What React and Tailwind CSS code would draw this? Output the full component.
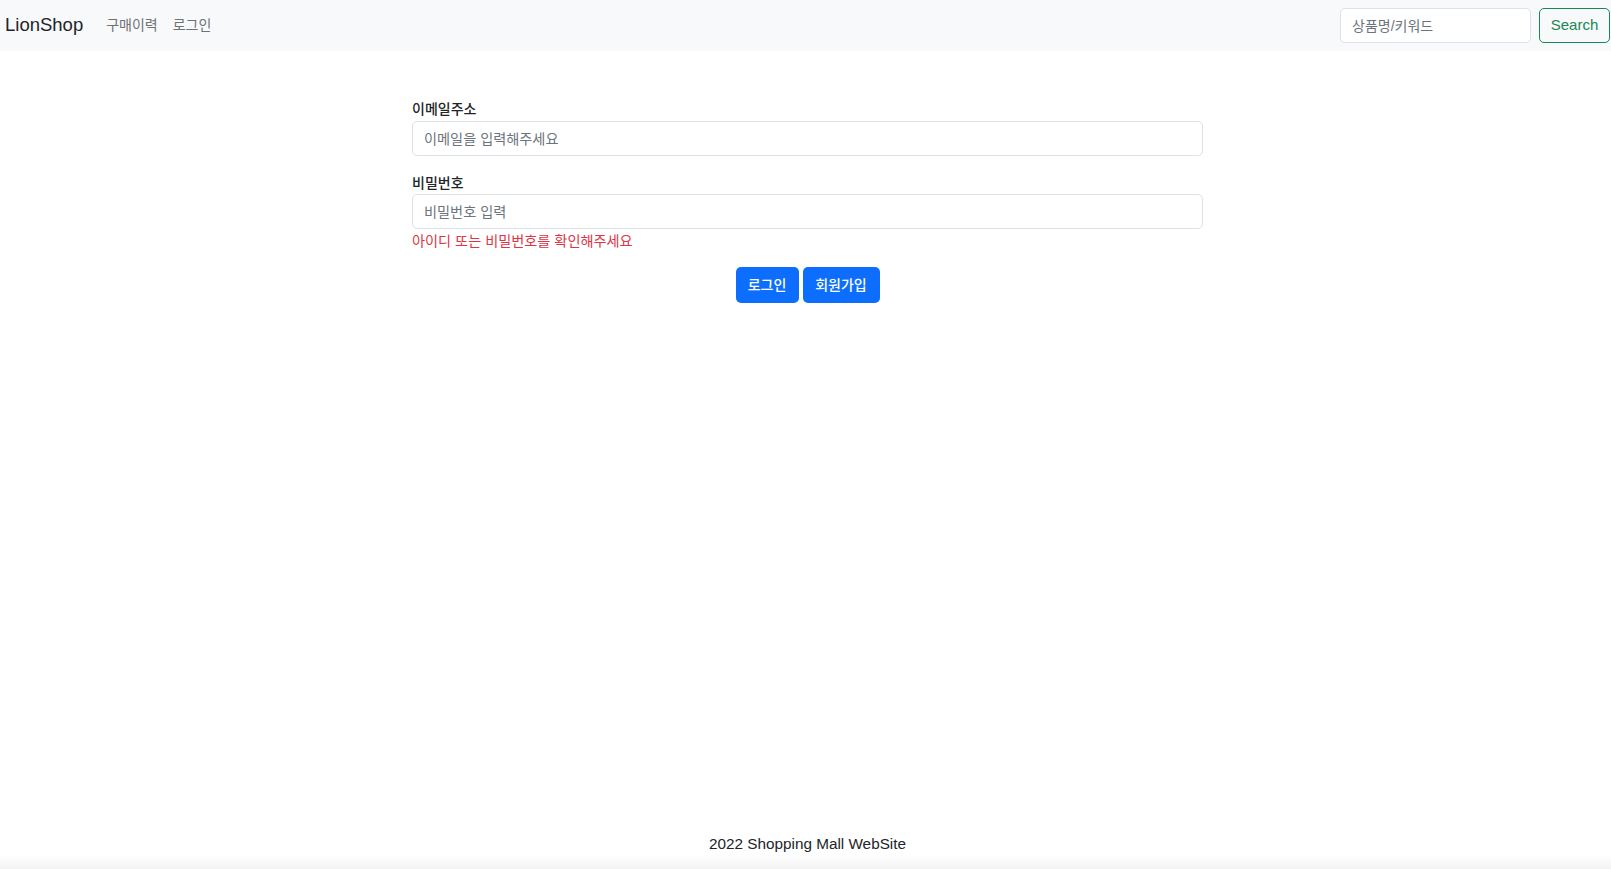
import React, { useState } from 'react';

const FONT = { fontFamily: '"Liberation Sans", "Noto Sans CJK KR", sans-serif' };

const Navbar = () => {
  const [keyword, setKeyword] = useState('');
  return (
    <nav className="flex items-center justify-between h-[51px] bg-[#f8f9fa] pl-[5px] pr-px">
      <div className="flex items-center">
        <a href="#" className="text-[18.5px] text-[#212529] mr-[23px] -mt-px">LionShop</a>
        <a href="#" className="text-[14px] text-[#6f7173] mr-[15px]">구매이력</a>
        <a href="#" className="text-[14px] text-[#6f7173]">로그인</a>
      </div>
      <form className="flex items-center gap-[8px]" onSubmit={(e) => e.preventDefault()}>
        <input
          type="text"
          value={keyword}
          onChange={(e) => setKeyword(e.target.value)}
          placeholder="상품명/키워드"
          className="w-[191px] h-[35px] px-[11px] text-[14px] bg-white border border-[#dee2e6] rounded-[5px] placeholder-[#6c757d] outline-none"
        />
        <button
          type="submit"
          className="w-[71px] h-[35px] text-[15px] text-[#198754] border border-[#198754] rounded-[5px]"
        >
          Search
        </button>
      </form>
    </nav>
  );
};

const LoginForm = () => {
  const [email, setEmail] = useState('');
  const [password, setPassword] = useState('');
  return (
    <form className="w-[791px] pt-[48px] ml-[412px]" onSubmit={(e) => e.preventDefault()}>
      <label className="block text-[14px] leading-[20px] font-medium text-[#212529] mb-[2px]">이메일주소</label>
      <input
        type="email"
        value={email}
        onChange={(e) => setEmail(e.target.value)}
        placeholder="이메일을 입력해주세요"
        className="block w-full h-[35px] px-[11px] text-[14.2px] border border-[#dee2e6] rounded-[5px] placeholder-[#6c757d] outline-none"
      />
      <label className="block mt-[17px] text-[14px] leading-[20px] font-medium text-[#212529] mb-px">비밀번호</label>
      <input
        type="password"
        value={password}
        onChange={(e) => setPassword(e.target.value)}
        placeholder="비밀번호 입력"
        className="block w-full h-[35px] px-[11px] text-[14.2px] border border-[#dee2e6] rounded-[5px] placeholder-[#6c757d] outline-none"
      />
      <p className="mt-[2px] text-[14.2px] leading-[20px] text-[#dc3545]">아이디 또는 비밀번호를 확인해주세요</p>
      <div className="flex justify-center gap-[4px] mt-[16px]">
        <button type="submit" className="w-[63px] h-[36px] text-[14px] font-medium text-white bg-[#0d6efd] rounded-[5px]">로그인</button>
        <button type="button" className="w-[77px] h-[36px] text-[14px] font-medium text-white bg-[#0d6efd] rounded-[5px]">회원가입</button>
      </div>
    </form>
  );
};

const App = () => {
  return (
    <div className="min-h-screen flex flex-col bg-white" style={FONT}>
      <Navbar />
      <main className="flex-1">
        <LoginForm />
      </main>
      <footer className="text-center">
        <p className="text-[15.3px] leading-[20px] text-[#212529] ml-[4px]">2022 Shopping Mall WebSite</p>
        <div className="h-[15px] bg-gradient-to-b from-white to-[#f3f3f3]" />
      </footer>
    </div>
  );
};

export default App;
